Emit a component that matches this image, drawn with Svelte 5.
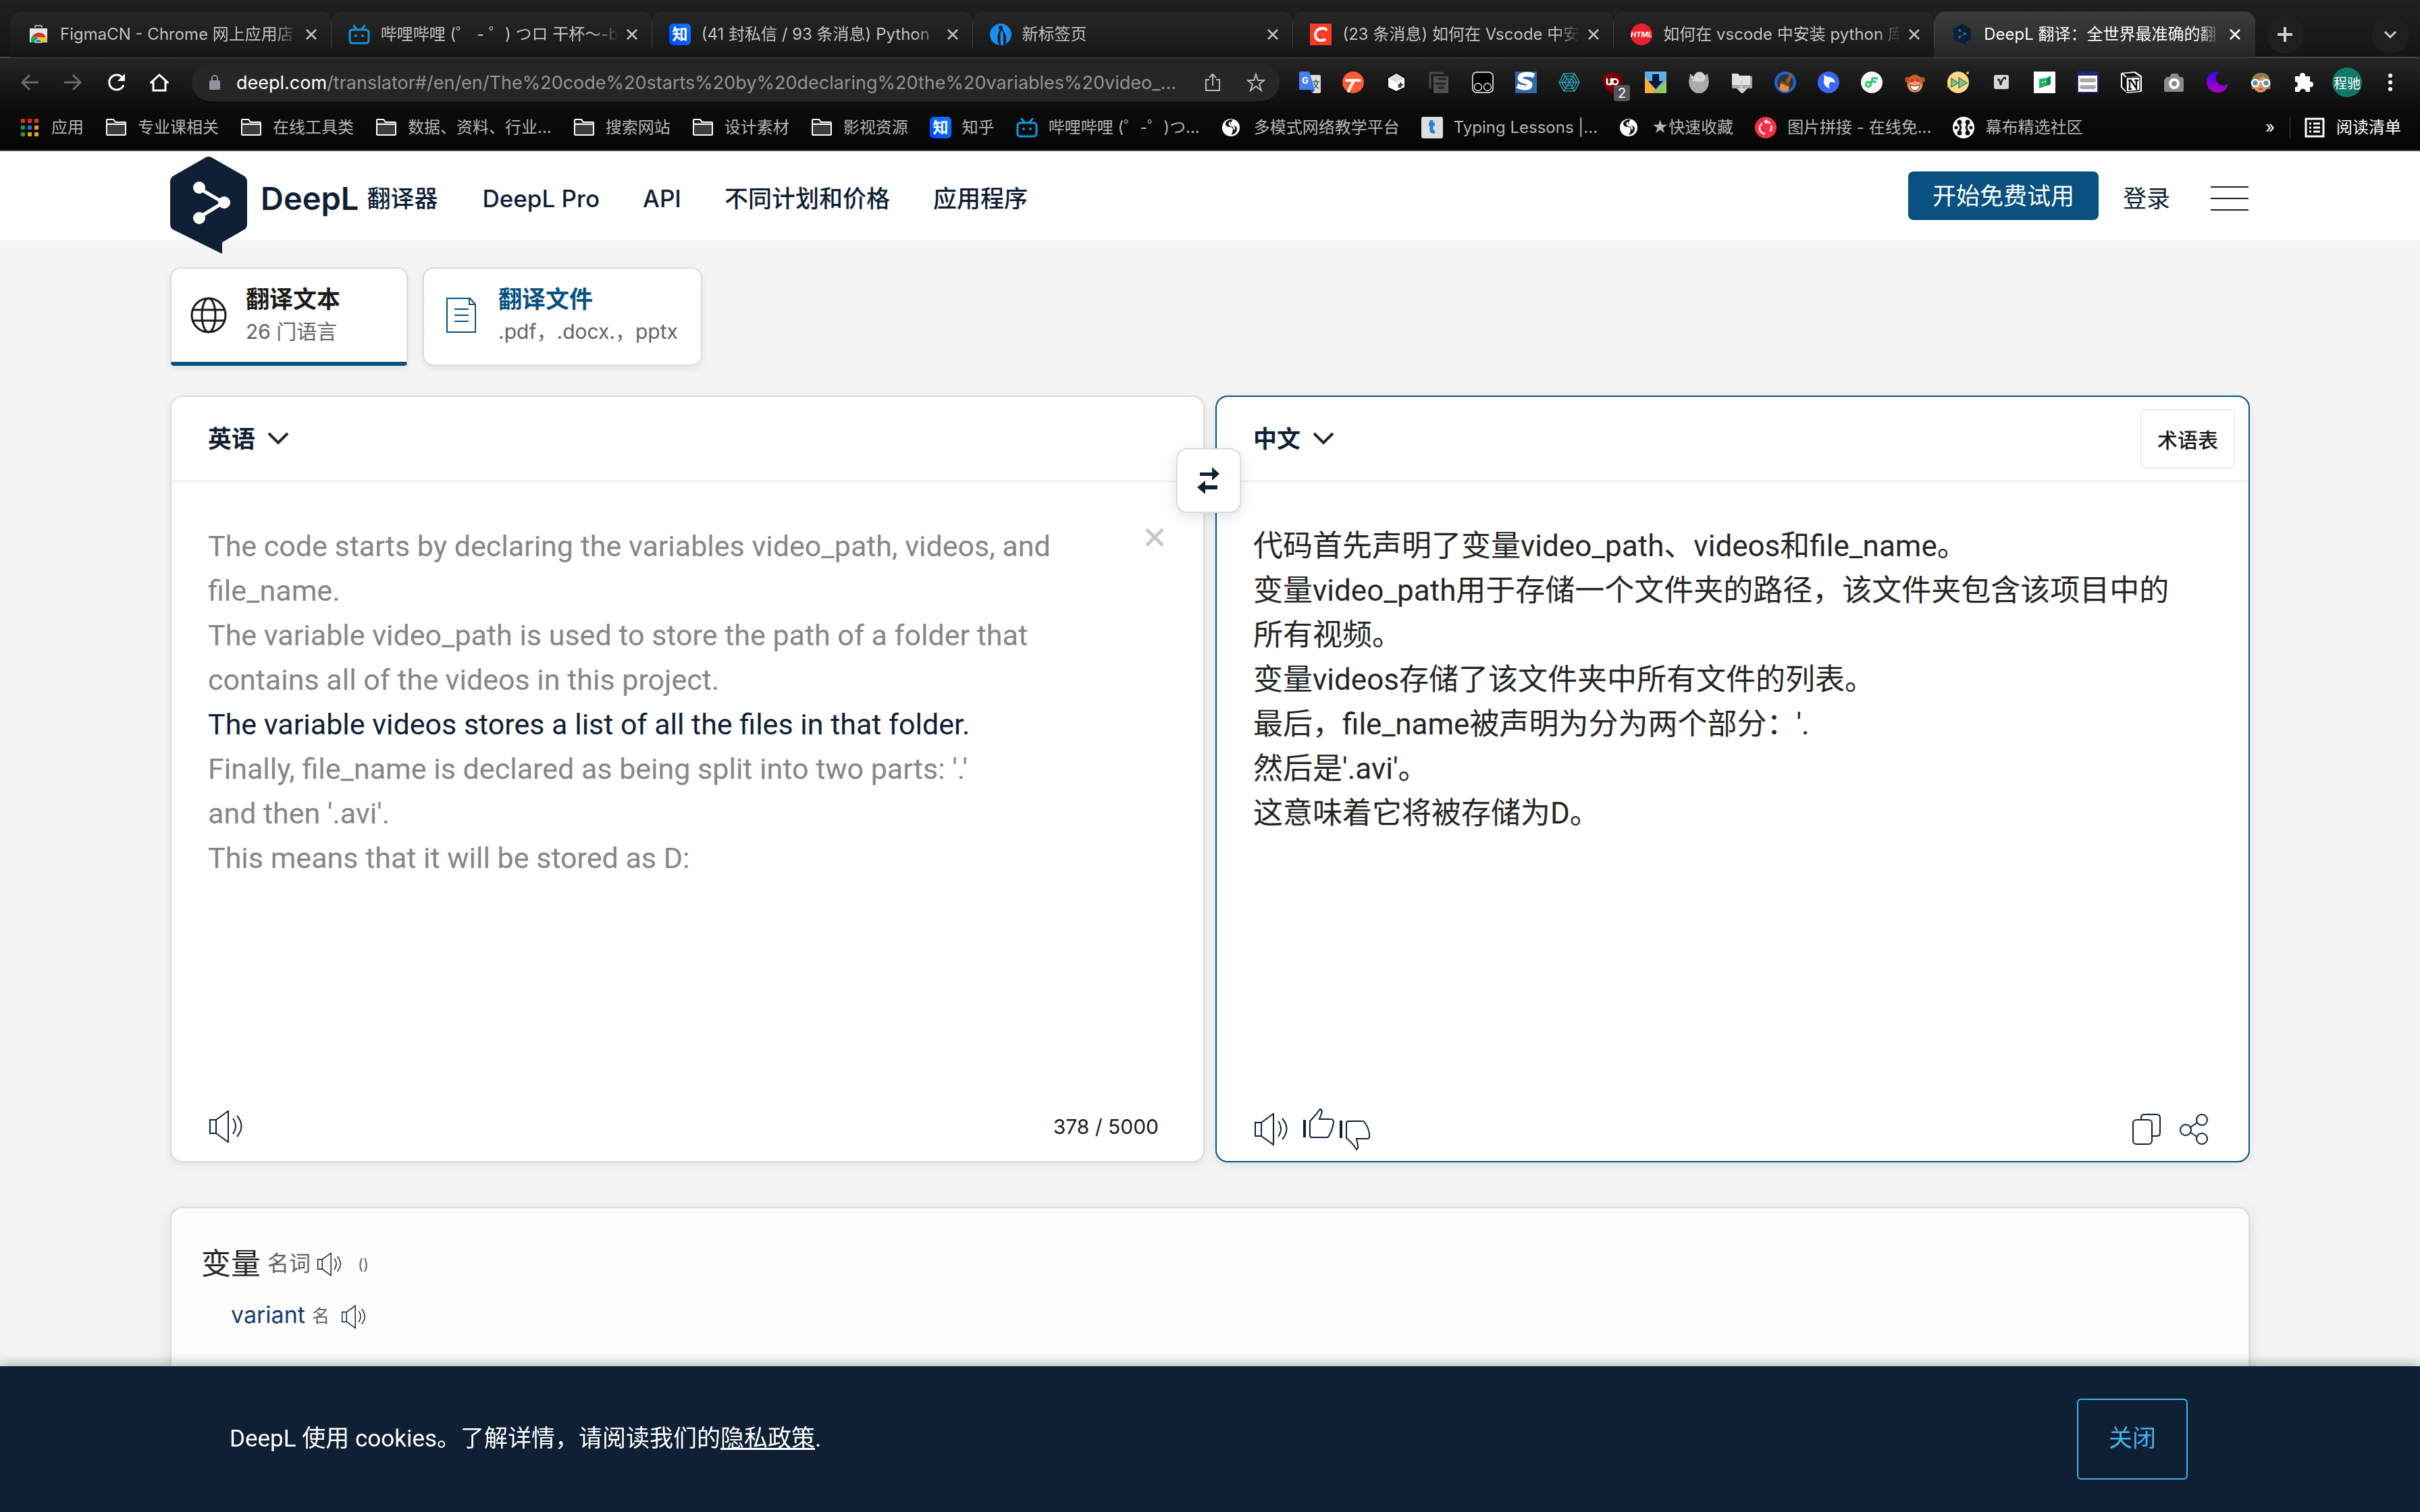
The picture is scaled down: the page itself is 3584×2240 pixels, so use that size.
<script lang="ts">
  type Icon = { name: string; svg: string }

  const bili = '<g fill="none" stroke="#1296db" stroke-width="3" stroke-linecap="round"><rect x="2" y="9" width="28" height="20" rx="4"/><path d="M8 3l4 5M24 3l-4 5"/></g><g fill="#1296db"><circle cx="11" cy="18" r="2"/><circle cx="21" cy="18" r="2"/></g>'
  const zhihu = '<defs><linearGradient id="zh" x1="0" y1="1" x2="1" y2="0"><stop stop-color="#0044ff"/><stop offset="1" stop-color="#0a7cff"/></linearGradient></defs><rect width="32" height="32" rx="6" fill="url(#zh)"/><text x="16" y="24" font-size="23" font-weight="700" fill="#fff" text-anchor="middle">知</text>'
  const globe = '<circle cx="14" cy="16" r="13" fill="#fff"/><path d="M13 4q-8 3-7 7t6 4 5 4-3 8q9-2 9-9 0-4-5-5t-4-4 3-5z" fill="#111"/><path d="M13 8q-3 3 1 5 6 1 5 6" fill="none" stroke="#fff" stroke-width="2.4"/>'
  const folder = '<path d="M2 7V5q0-1 1-1h9l3 4h14q1 0 1 1v17q0 1-1 1H3q-1 0-1-1z" fill="#3d3d3d" stroke="#fff" stroke-width="2"/><path d="M2 11h28" stroke="#fff" stroke-width="2"/><path d="M3 5h8l2 3H3z" fill="#111"/>'

  const tabs = [
    { title: 'FigmaCN - Chrome 网上应用店', svg: '<path d="M11 6V4q0-1 1-1h8q1 0 1 1v2" fill="none" stroke="#aaa" stroke-width="2"/><path d="M3 7h26v21H3z" fill="#e6e6e6"/><path d="M5 28a11 11 0 0 1 6-13l5 8-2 5z" fill="#2da44e"/><path d="M8 18a11 11 0 0 1 19 2H16z" fill="#dc2b2b"/><path d="M16 20h11q2 3 1 8H16z" fill="#fbc116"/><path d="M11 28a5 5 0 1 1 10 0z" fill="#2a7de1" stroke="#fff"/>' },
    { title: '哔哩哔哩 (゜ - ゜) つロ 干杯～-b', svg: bili },
    { title: '(41 封私信 / 93 条消息) Python', svg: zhihu },
    { title: '新标签页', svg: '<circle cx="16" cy="16" r="16" fill="#1490f2"/><path d="M14 32C10 24 11 15 15 9q2-1 4 0c5 6 6 14 4 21q-3 2-9 2z" fill="#151515"/><path d="M16 32q-1-12 0-21h3q2 10 1 21z" fill="#1490f2"/><circle cx="16" cy="6" r="3" fill="#151515"/>' },
    { title: '(23 条消息) 如何在 Vscode 中安', svg: '<path d="M0 0h32v32H0z" fill="#fc3b25"/><path d="M25 10q-3-4-8-3c-7 1-9 6-9 10s3 8 8 8q4 0 7-2" fill="none" stroke="#fff" stroke-width="4"/>' },
    { title: '如何在 vscode 中安装 python 库', svg: '<circle cx="16" cy="16" r="16" fill="#f01f2c"/><text x="16" y="20" font-size="11" font-weight="700" font-style="italic" fill="#fff" text-anchor="middle">HTML</text>' },
    { title: 'DeepL 翻译：全世界最准确的翻', active: true, svg: '<path d="M16 0l12 7q1 1 1 2v13q0 1-1 2l-6 3v5L4 24q-1-1-1-2V9q0-1 1-2z" fill="#0a2239"/><g fill="#41617f"><circle cx="12" cy="10" r="2"/><circle cx="20" cy="15" r="2"/><circle cx="12" cy="20" r="2"/></g><path d="M12 10l8 5-8 5" fill="none" stroke="#41617f"/>' },
  ]

  const extensions: Icon[] = [
    { name: 'Google 翻译', svg: '<path d="M14 5h16q2 0 2 2v23q0 2-2 2H20z" fill="#dcdcdc"/><path d="M20 15h10M25 12v3M28 15q-2 7-7 10M22 17q2 5 7 8" stroke="#57707a" stroke-width="2" fill="none"/><path d="M16 27h7l-4 5z" fill="#2a35b8"/><path d="M2 0h13l8 27H2q-2 0-2-2V2q0-2 2-2z" fill="#4580f0"/><text x="9" y="18" font-size="13" font-weight="700" fill="#fff" text-anchor="middle">G</text>' },
    { name: 'Tampermonkey', svg: '<circle cx="16" cy="16" r="16" fill="#ff5a33"/><path d="M6 13h20M17 13L9 29" stroke="#fff" stroke-width="4" stroke-linecap="round" fill="none"/>' },
    { name: '3D', svg: '<path d="M16 1l13 7v16l-13 8-13-8V8z" fill="#000"/><path d="M16 3l12 7v13l-12 6-12-6V10z" fill="#fff"/><path d="M16 3l12 7-12 6-12-6z" fill="#dcdcdc"/><path d="M22 16v8M18 20h8M19 24l5-6" stroke="#333" stroke-width="2"/>' },
    { name: '复制', svg: '<path d="M2 25V2h20" fill="none" stroke="#4c4c4c" stroke-width="3"/><path d="M7 7h22v25H7z" fill="#505050"/><path d="M14 11h12M10 18h15M13 24h10" stroke="#222" stroke-width="3"/>' },
    { name: '油猴', svg: '<rect x="1" y="1" width="30" height="30" rx="6" fill="#000" stroke="#fff" stroke-width="1.5"/><circle cx="9" cy="23" r="5.5" fill="none" stroke="#fff" stroke-width="1.3"/><circle cx="23" cy="23" r="5.5" fill="none" stroke="#fff" stroke-width="1.3"/>' },
    { name: 'Stylus', svg: '<path d="M0 0h32v32H0z" fill="#2f69a8"/><path d="M28 6q-12-4-19 0-5 5 3 8 9 2 10 5 0 5-7 5-6 0-12-3" fill="none" stroke="#fff" stroke-width="7"/>' },
    { name: '蛛网', svg: '<g fill="none" stroke="#2997ab" stroke-width="1.6"><path d="M8 3h16l7 13-7 13H8L1 16z"/><path d="M10 7h12l5 9-5 9H10l-5-9z"/><path d="M12 11h8l3 5-3 5h-8l-3-5z"/><path d="M8 3l16 26M24 3L8 29M1 16h30"/></g>' },
    { name: 'uBlock', svg: '<path d="M16 0q5 4 14 4v12q-1 10-14 16Q3 26 2 16V4q9 0 14-4z" fill="#7a0008"/><path d="M8 10v7q0 2 3 2h3v-9M16 10v9" fill="none" stroke="#fff" stroke-width="2.6"/><circle cx="20" cy="15" r="4" fill="none" stroke="#fff" stroke-width="2.4"/>' },
    { name: '下载', svg: '<path d="M0 0h32v32H0z" fill="#5fb0e3"/><path d="M0 8l16 18-4 6H0z" fill="#fbab44"/><path d="M32 12L12 32h20z" fill="#8fcb60"/><path d="M11 4h10v10h6L16 26 5 14h6z" fill="#06163c"/>' },
    { name: '果汁', svg: '<path d="M1 15L3 3l7 5 12 0 7-5 2 12z" fill="#a4a4a4"/><circle cx="17" cy="9" r="8.5" fill="#d9d9d9"/><path d="M17 9V2M17 9l6-4M17 9l-6-4M17 9l7 4" stroke="#bbb"/><path d="M1 15h30q-1 13-11 17h-8Q2 28 1 15z" fill="#ababab"/><circle cx="6" cy="9" r="1.2" fill="#fff"/><circle cx="8" cy="13" r="1.2" fill="#fff"/>' },
    { name: '下载夹', svg: '<path d="M5 7h26v18H5z" fill="#a5a5a5"/><path d="M1 3h9l2 3h16v19H1z" fill="#e2e2e2"/><path d="M1 20h27v5H1z" fill="#9c9c9c"/><path d="M3 22h24" stroke="#ddd" stroke-dasharray="1 2" stroke-width="2"/><path d="M15 13v16M11 26l5 5 5-5z" stroke="#cfcfcf" stroke-width="3" fill="#cfcfcf"/>' },
    { name: '清理', svg: '<circle cx="16" cy="16" r="14" fill="#303438" stroke="#1d63dc" stroke-width="4"/><path d="M24 2l3 2-6 14-5-3z" fill="#a25628"/><path d="M11 14l12 6-1 3-13-6z" fill="#8a4420"/><path d="M9 17l13 6-2 6q-8 2-13-3z" fill="#e98c2f"/>' },
    { name: '海豚', svg: '<circle cx="16" cy="16" r="16" fill="#3867fb"/><path d="M9 5l6 3q9 0 11 9-5-3-8-1-3 4 0 9Q6 21 10 10z" fill="#fff"/>' },
    { name: '飞书', svg: '<circle cx="16" cy="16" r="16" fill="#f7f7f7"/><circle cx="11" cy="19" r="3.6" fill="none" stroke="#2dc868" stroke-width="3"/><path d="M15 18l2-8h8M17 15h6" fill="none" stroke="#2dc868" stroke-width="3"/>' },
    { name: '猴子', svg: '<path d="M12 6l-1-3 4 2 1-4 2 4 3-2-1 4z" fill="#5c2a15"/><circle cx="5" cy="12" r="4" fill="#a85228"/><circle cx="27" cy="12" r="4" fill="#a85228"/><ellipse cx="16" cy="18" rx="12" ry="13" fill="#c2642f"/><ellipse cx="16" cy="22" rx="10" ry="8" fill="#e9a273"/><circle cx="12" cy="13" r="2.6" fill="#f02a1d"/><circle cx="20" cy="13" r="2.6" fill="#f02a1d"/><path d="M9 20q7 3 14 0-1 8-7 8t-7-8z" fill="#fff" stroke="#54230f"/>' },
    { name: '快进', svg: '<circle cx="16" cy="16" r="16" fill="#fbd88a"/><circle cx="30" cy="2" r="2" fill="#f4b21a"/><circle cx="1" cy="22" r="1.5" fill="#f4b21a"/><path d="M6 10l10 7-10 6zM17 9l12 8-12 7z" fill="#7fc489" stroke="#4a7d51" stroke-width="1.4"/>' },
    { name: '待办', svg: '<rect x="5" y="5" width="22" height="21" rx="3" fill="#d6d6d6"/><path d="M10 12h3l2 8q1-8 5-10" fill="none" stroke="#222" stroke-width="2.4"/><path d="M18 8h5v5z" fill="#222"/>' },
    { name: '聊天', svg: '<path d="M0 0h32v32H0z" fill="#fff"/><path d="M8 11l14-2v11L8 25z" fill="#1cb066"/><path d="M20 9l5-3v13l-5 2z" fill="#0f8a4d"/><path d="M12 16h2M16 15h2" stroke="#fff" stroke-width="2"/>' },
    { name: '阅读', svg: '<path d="M0 0h32v32H0z" fill="#fff"/><path d="M1 1h30v30H1z" fill="none" stroke="#20257e" stroke-width="2"/><path d="M0 0h32v6H0z" fill="#20257e"/><path d="M7 13h18M7 23h18" stroke="#aaa" stroke-width="6" stroke-linecap="round"/>' },
    { name: 'Notion', svg: '<path d="M2 3l20-2 9 6v22l-21 2-8-8z" fill="#fff" stroke="#fff" stroke-width="2" stroke-linejoin="round"/><path d="M3 4l6 6v19l-6-6zM5 3l16-1 7 5-18 1z" fill="#111"/><path d="M9 9l20-1v20L9 30z" fill="#fff" stroke="#111" stroke-width="1.5"/><path d="M12 13h4l8 12V13M21 13h6M14 13v12M12 26h5" fill="none" stroke="#111" stroke-width="2.4"/>' },
    { name: '截图', svg: '<path d="M3 11l1-3h5l3-5h9l3 5h4l2 3v17q0 2-2 2H3q-2 0-2-2V13q0-2 2-2z" fill="#8b8b8b"/><circle cx="16" cy="18" r="6" fill="#8b8b8b" stroke="#fff" stroke-width="4"/>' },
    { name: '夜间模式', svg: '<defs><linearGradient id="moon" x2="0" y2="1"><stop stop-color="#3f00ff"/><stop offset="1" stop-color="#b300b8"/></linearGradient></defs><path d="M19 0C7 9 18 27 32 18 28 38 0 34 0 15 0 5 9-1 19 0z" fill="url(#moon)"/>' },
    { name: '眼镜', svg: '<path d="M3 26Q-1 3 16 2t14 24z" fill="#97774c"/><ellipse cx="16" cy="19" rx="11" ry="12" fill="#da9164"/><path d="M5 13Q15 13 20 6q3 5 7 6 0-10-11-10T5 13z" fill="#97774c"/><circle cx="8" cy="17" r="5" fill="#5794a3" stroke="#fff" stroke-width="2.6"/><circle cx="24" cy="17" r="5" fill="#5794a3" stroke="#fff" stroke-width="2.6"/><path d="M13 15q3-1 6 0" stroke="#fff" stroke-width="2" fill="none"/><path d="M12 26q4-2 8 0-4 2-8 0z" fill="#b0392b"/>' },
    { name: '扩展程序', svg: '<path d="M3 7h7V6a4 4 0 0 1 8 0v1h7v8h1a4 4 0 0 1 0 8h-1v7h-6a4 4 0 0 0-9 0H3v-7a4 4 0 0 0 0-8z" fill="#fff"/>' },
  ]

  const bookmarks = [
    { title: '应用', svg: '<g><path d="M3 3h6v6H3zM13 3h6v6h-6zM23 3h6v6h-6z" fill="#ea2a2a"/><path d="M3 13h6v6H3zM3 23h6v6H3z" fill="#2b9348"/><path d="M13 13h6v6h-6z" fill="#1a73e8"/><path d="M23 13h6v6h-6zM13 23h6v6h-6zM23 23h6v6h-6z" fill="#f39c12"/></g>' },
    { title: '专业课相关', svg: folder },
    { title: '在线工具类', svg: folder },
    { title: '数据、资料、行业...', svg: folder },
    { title: '搜索网站', svg: folder },
    { title: '设计素材', svg: folder },
    { title: '影视资源', svg: folder },
    { title: '知乎', svg: zhihu },
    { title: '哔哩哔哩 (゜-゜)つ...', svg: bili },
    { title: '多模式网络教学平台', svg: globe },
    { title: 'Typing Lessons |...', svg: '<rect width="32" height="32" rx="3" fill="#dedede"/><path d="M15 5v15q0 3 5 2M11 11h9" fill="none" stroke="#2b7fd0" stroke-width="5"/>' },
    { title: '★快速收藏', svg: globe },
    { title: '图片拼接 - 在线免...', svg: '<circle cx="16" cy="16" r="16" fill="#fb2f43"/><path d="M11 10a8 8 0 0 0 4 15" fill="none" stroke="#fff" stroke-width="2.5"/><path d="M15 7h3a9 9 0 0 1 4 15" fill="none" stroke="#fff" stroke-width="2.5" stroke-dasharray="9 3"/><path d="M18 3v8l-5-4z" fill="#fff"/>' },
    { title: '幕布精选社区', svg: '<circle cx="16" cy="16" r="16" fill="#fff"/><g fill="#111"><circle cx="10" cy="8" r="3.5"/><circle cx="22" cy="8" r="3.5"/><circle cx="10" cy="24" r="3.5"/><circle cx="22" cy="24" r="3.5"/><circle cx="5" cy="16" r="2.6"/><circle cx="27" cy="16" r="2.6"/></g><path d="M9 8l3 8-3 8M23 8l-3 8 3 8" fill="none" stroke="#111" stroke-width="3"/>' },
  ]

  const source = [
    { text: 'The code starts by declaring the variables video_path, videos, and\nfile_name.' },
    { text: 'The variable video_path is used to store the path of a folder that\ncontains all of the videos in this project.' },
    { text: 'The variable videos stores a list of all the files in that folder.', current: true },
    { text: "Finally, file_name is declared as being split into two parts: '.'\nand then '.avi'." },
    { text: 'This means that it will be stored as D:' },
  ]

  const target = [
    '代码首先声明了变量video_path、videos和file_name。',
    '变量video_path用于存储一个文件夹的路径，该文件夹包含该项目中的',
    '所有视频。',
    '变量videos存储了该文件夹中所有文件的列表。',
    "最后，file_name被声明为分为两个部分：'.",
    "然后是'.avi'。",
    '这意味着它将被存储为D。',
  ].join('\n')
</script>

{#snippet speaker()}
  <svg class="speaker" viewBox="0 0 50 48" aria-hidden="true">
    <path d="M1 14h9v20H1zM10 14L28 1v46L10 34M35 12q8 11 0 23M41 8q13 15 0 31" />
  </svg>
{/snippet}

{#snippet chevron()}
  <svg class="chevron" viewBox="0 0 32 20" aria-hidden="true"><path d="M2 2l14 14L30 2" /></svg>
{/snippet}

<div class="page">
  <div class="browser">
    <div class="tabstrip">
      <div class="tabs" role="tablist">
        {#each tabs as tab}
          <div class="tab" class:active={tab.active} role="tab" tabindex="0" aria-selected={!!tab.active}>
            <svg class="icon" viewBox="0 0 32 32" aria-hidden="true">{@html tab.svg}</svg>
            <span class="tab-title">{tab.title}</span>
            <button class="tab-close" aria-label="关闭标签页">
              <svg viewBox="0 0 16 16"><path d="M1 1l14 14M15 1L1 15" /></svg>
            </button>
          </div>
        {/each}
      </div>
      <button class="round" aria-label="新标签页"><svg viewBox="0 0 24 24"><path d="M12 1v22M1 12h22" stroke-width="4" /></svg></button>
      <button class="round last" aria-label="搜索标签页"><svg viewBox="0 0 24 24"><path d="M4 8l8 8 8-8" stroke-width="3" /></svg></button>
    </div>

    <div class="toolbar">
      <button class="tool dim" aria-label="后退"><svg viewBox="0 0 28 28"><path d="M27 14H3M14 3L3 14l11 11" /></svg></button>
      <button class="tool dim" aria-label="前进"><svg viewBox="0 0 28 28"><path d="M1 14h24M14 3l11 11-11 11" /></svg></button>
      <button class="tool" aria-label="重新加载"><svg viewBox="0 0 28 28"><path d="M24 8A11 11 0 1 0 25 18" /><path d="M27 1v11H16z" fill="#fff" stroke="none" /></svg></button>
      <button class="tool" aria-label="主页"><svg viewBox="0 0 28 28"><path d="M5 14v12h18V14h3L14 3 2 14z" /></svg></button>
      <div class="omnibox">
        <svg class="lock" viewBox="0 0 16 22" aria-hidden="true"><path d="M4 9V5a4 4 0 0 1 8 0v4" fill="none" stroke="#8d9299" stroke-width="2" /><rect y="8" width="16" height="14" rx="2" fill="#9095a0" /></svg>
        <label for="url">deepl.com</label>
        <input id="url" value="/translator#/en/en/The%20code%20starts%20by%20declaring%20the%20variables%20video_..." />
        <button class="tool grey" aria-label="分享"><svg viewBox="0 0 28 28"><path d="M9 10H4v16h20V10h-5M14 19V2M9 7l5-5 5 5" /></svg></button>
        <button class="tool grey" aria-label="添加书签"><svg viewBox="0 0 28 28"><path d="M14 2l3 9h9l-7 6 3 9-8-6-8 6 3-9-7-6h9z" /></svg></button>
      </div>
      <div class="extensions">
        {#each extensions as ext}
          <button class="ext" aria-label={ext.name}>
            <svg class="icon" viewBox="0 0 32 32">{@html ext.svg}</svg>
            {#if ext.name === 'uBlock'}<span class="badge">2</span>{/if}
          </button>
        {/each}
        <button class="avatar">程驰</button>
        <button class="ext" aria-label="菜单"><svg class="icon" viewBox="0 0 32 32" fill="#fff"><circle cx="16" cy="6" r="3" /><circle cx="16" cy="16" r="3" /><circle cx="16" cy="26" r="3" /></svg></button>
      </div>
    </div>

    <nav class="bookmarks" aria-label="书签">
      {#each bookmarks as mark}
        <a href="#bookmark"><svg class="icon" viewBox="0 0 32 32" aria-hidden="true">{@html mark.svg}</svg>{mark.title}</a>
      {/each}
      <button class="more">»</button>
      <a class="reading" href="#reading">
        <svg class="icon" viewBox="0 0 32 32" aria-hidden="true"><path d="M3 3h26v26H3zM14 10h10M14 16h10M14 22h10M8 10h3M8 16h3M8 22h3" fill="none" stroke="#fff" stroke-width="3" /></svg>阅读清单
      </a>
    </nav>
  </div>

  <header class="site-header">
    <a class="brand" href="#home">
      <svg class="logo" viewBox="0 0 114 144" aria-hidden="true">
        <path d="M53 1q4-2 8 0l49 28q4 3 4 8v63q0 5-4 8l-33 19v17L4 108q-4-3-4-8V37q0-5 4-8z" fill="#0f2035" />
        <path d="M43 47l36 21-36 22" fill="none" stroke="#fff" stroke-width="5" />
        <g fill="#fff"><circle cx="43" cy="46" r="9" /><circle cx="80" cy="68" r="9" /><circle cx="43" cy="91" r="9" /></g>
      </svg>
      <span class="brand-name">DeepL</span>
      <span class="brand-sub">翻译器</span>
    </a>
    <nav class="links" aria-label="主导航">
      <a href="#pro">DeepL Pro</a>
      <a href="#api">API</a>
      <a href="#plans">不同计划和价格</a>
      <a href="#apps">应用程序</a>
    </nav>
    <button class="trial">开始免费试用</button>
    <a class="login" href="#login">登录</a>
    <button class="burger" aria-label="菜单"><span></span><span></span><span></span></button>
  </header>

  <main>
    <div class="modes">
      <button class="mode selected">
        <svg viewBox="0 0 54 54" aria-hidden="true"><circle cx="27" cy="27" r="25" /><ellipse cx="27" cy="27" rx="10" ry="25" /><path d="M4 19h46M4 35h46" /></svg>
        <span class="mode-text"><strong>翻译文本</strong><span>26 门语言</span></span>
      </button>
      <button class="mode">
        <svg class="thin" viewBox="0 0 54 54" aria-hidden="true"><path d="M6 2h34l8 9v41H6zM39 2v9h9M17 18h21M17 27h21M17 36h21" /></svg>
        <span class="mode-text"><strong>翻译文件</strong><span>.pdf，.docx.，pptx</span></span>
      </button>
    </div>

    <div class="translator">
      <section class="panel">
        <div class="panel-head">
          <button class="lang">英语{@render chevron()}</button>
        </div>
        <div class="panel-body">
          <div class="source" contenteditable="true" role="textbox" tabindex="0" aria-multiline="true" aria-label="原文">
            {#each source as part}<p class:current={part.current}>{part.text}</p>{/each}
          </div>
          <button class="clear" aria-label="清除"><svg viewBox="0 0 28 28"><path d="M2 2l24 24M26 2L2 26" /></svg></button>
        </div>
        <div class="panel-foot">
          <button aria-label="朗读">{@render speaker()}</button>
          <span class="count">378 / 5000</span>
        </div>
      </section>

      <button class="swap" aria-label="交换语言">
        <svg viewBox="0 0 34 40"><path d="M4 8h18V0l11 10-11 10v-7H4zM30 27H12v-7L0 30l12 10v-7h18z" /></svg>
      </button>

      <section class="panel focused">
        <div class="panel-head">
          <button class="lang">中文{@render chevron()}</button>
          <button class="glossary">术语表</button>
        </div>
        <div class="panel-body">
          <textarea aria-label="译文" spellcheck="false" value={target}></textarea>
        </div>
        <div class="panel-foot target-foot">
          <button class="listen" aria-label="朗读">{@render speaker()}</button>
          <button aria-label="赞"><svg class="thumb" viewBox="0 0 46 63"><path class="bar" d="M2 17v26" /><path d="M10 19Q19 10 25 1q4 2 2 7l-3 8h17q4 0 4 5-2 12-7 20-1 2-3 2H13q-3 0-3-3z" /></svg></button>
          <button aria-label="踩"><svg class="thumb" viewBox="0 0 46 63"><path class="bar" d="M2 18v26" /><path d="M10 22q0-3 3-3h21q2 0 3 2 6 8 7 17 1 7-3 7H25l2 10q1 4-2 6-6-10-15-17z" /></svg></button>
          <button class="push" aria-label="复制"><svg class="action" viewBox="0 0 42 46"><rect x="1" y="9" width="28" height="36" rx="5" /><path d="M13 9V6q0-5 5-5h18q5 0 5 5v22q0 5-5 5h-7" /></svg></button>
          <button aria-label="分享"><svg class="action" viewBox="0 0 42 46"><circle cx="9" cy="24" r="8" /><circle cx="33" cy="9" r="8" /><circle cx="33" cy="37" r="8" /><path d="M16 20l10-7M16 28l10 6" /></svg></button>
        </div>
      </section>
    </div>

    <section class="dictionary">
      <div class="entry">
        <span class="term">变量</span>
        <span class="kind">名词</span>
        <button aria-label="朗读">{@render speaker()}</button>
        <span class="note">()</span>
      </div>
      <div class="entry meaning">
        <a href="#variant">variant</a>
        <span class="kind-small">名</span>
        <button aria-label="朗读">{@render speaker()}</button>
      </div>
    </section>
  </main>

  <aside class="cookies">
    <p>DeepL 使用 cookies。了解详情，请阅读我们的<a href="#privacy">隐私政策</a>.</p>
    <button>关闭</button>
  </aside>
</div>

<style>
  :global(body) {
    background: #f4f4f4;
  }

  .page {
    --navy: #0f2035;
    --blue: #085180;
    --line: #dcdcdc;
    display: flex;
    flex-direction: column;
    height: 100vh;
    overflow: hidden;
    font-family: Inter, "Noto Sans CJK SC", sans-serif;
    color: var(--navy);
  }

  .page :global(*) {
    box-sizing: border-box;
  }

  button {
    display: flex;
    align-items: center;
    justify-content: center;
    padding: 0;
    border: 0;
    background: none;
    color: inherit;
    font: inherit;
    cursor: pointer;
  }

  a {
    color: inherit;
    text-decoration: none;
  }

  p {
    margin: 0;
  }

  svg {
    display: block;
    flex: none;
  }

  .icon {
    width: 32px;
    height: 32px;
  }

  /* browser chrome */
  .browser {
    flex: none;
    background: #050505;
    border-bottom: 2px solid #444;
    font-size: 24px;
    color: #b4b4b4;
  }

  .tabstrip {
    display: flex;
    align-items: center;
    height: 86px;
    padding: 18px 16px 0;
    background: linear-gradient(#212121, #141414);
    border-bottom: 2px solid #444;
  }

  .tabs {
    display: flex;
    flex: 1;
    min-width: 0;
    height: 68px;
  }

  .tab {
    display: flex;
    flex: 1 1 0;
    align-items: center;
    min-width: 0;
    padding: 0 22px 0 25px;
    border-radius: 16px 16px 0 0;
    background: linear-gradient(90deg, #444, #444) right center / 1px 40px no-repeat, linear-gradient(#272727, #161616);
    color: #c4c4c4;
  }

  .tab.active {
    background: linear-gradient(#3d3d3d, #262626);
    color: #fff;
  }

  .tab-title {
    flex: 1;
    margin: 0 12px 0 16px;
    overflow: hidden;
    white-space: nowrap;
    line-height: 32px;
    mask-image: linear-gradient(90deg, #000 calc(100% - 36px), transparent);
  }

  .tab-close svg {
    width: 16px;
    height: 16px;
    stroke: currentColor;
    stroke-width: 2.5;
  }

  .round {
    width: 56px;
    height: 56px;
    margin-left: 16px;
    border-radius: 50%;
    background: #1f1f1f;
    color: #d0d0d0;
  }

  .round.last {
    margin-left: 100px;
  }

  .round svg {
    width: 24px;
    height: 24px;
    fill: none;
    stroke: currentColor;
  }

  .toolbar {
    display: flex;
    align-items: center;
    height: 72px;
    padding: 0 28px;
    background: linear-gradient(#262626, #0c0c0c);
  }

  .tool {
    width: 32px;
    margin-right: 32px;
    color: #fff;
  }

  .tool.dim {
    color: #6b6b6b;
  }

  .tool.grey {
    margin: 0 0 0 32px;
    color: #bbb;
  }

  .tool svg {
    width: 28px;
    height: 28px;
    fill: none;
    stroke: currentColor;
    stroke-width: 3;
  }

  .tool.grey svg {
    stroke-width: 2;
  }

  .omnibox {
    display: flex;
    flex: 1;
    align-items: center;
    height: 56px;
    padding: 0 19px 0 26px;
    border-radius: 28px;
    background: #262626;
    font-size: 27px;
  }

  .lock {
    width: 16px;
    height: 22px;
    margin-right: 24px;
  }

  .omnibox label {
    color: #fff;
  }

  .omnibox input {
    flex: 1;
    min-width: 0;
    padding: 0;
    border: 0;
    outline: 0;
    background: none;
    color: #949494;
    font: inherit;
  }

  .extensions {
    display: flex;
    align-items: center;
    gap: 32px;
    margin-left: 29px;
  }

  .ext {
    position: relative;
  }

  .badge {
    position: absolute;
    top: 20px;
    left: 18px;
    width: 24px;
    border-radius: 4px;
    background: #555;
    color: #fff;
    font-size: 20px;
    line-height: 24px;
  }

  .avatar {
    width: 44px;
    height: 44px;
    margin: 0 -6px;
    border-radius: 50%;
    background: #0f7a68;
    color: #fff;
    font-size: 20px;
    white-space: nowrap;
  }

  .bookmarks {
    display: flex;
    align-items: center;
    gap: 32px;
    height: 64px;
    padding: 0 28px 2px;
    background: linear-gradient(#0c0c0c, #050505);
    line-height: 32px;
    white-space: nowrap;
  }

  .bookmarks a {
    display: flex;
    align-items: center;
    gap: 16px;
  }

  .more {
    margin-left: auto;
    color: #fff;
  }

  .bookmarks .reading {
    margin-left: -10px;
    padding-left: 20px;
    border-left: 1px solid #444;
    color: #fff;
  }

  /* site header */
  .site-header {
    display: flex;
    flex: none;
    align-items: center;
    height: 132px;
    padding: 8px 254px 0 252px;
    background: #fff;
    font-size: 35px;
    line-height: 48px;
  }

  .brand {
    display: flex;
    align-items: center;
    height: 124px;
    font-weight: 600;
  }

  .logo {
    align-self: flex-start;
    width: 114px;
    height: 144px;
  }

  .brand-name {
    margin: 0 12px 0 20px;
    font-size: 47px;
  }

  .brand-sub {
    font-weight: 500;
  }

  .links {
    display: flex;
    flex: 1;
    gap: 64px;
    margin-left: 66px;
    font-weight: 500;
  }

  .trial {
    height: 72px;
    margin-bottom: 8px;
    padding: 0 36px;
    border-radius: 8px;
    background: var(--blue);
    color: #fff;
  }

  .login {
    margin: 0 60px 0 36px;
  }

  .burger {
    flex-direction: column;
    gap: 15px;
    width: 56px;
  }

  .burger span {
    width: 100%;
    height: 2px;
    background: var(--navy);
  }

  /* translator */
  main {
    display: flex;
    flex: 1;
    flex-direction: column;
    padding: 40px 252px 0;
  }

  .modes {
    display: flex;
    gap: 22px;
    margin-bottom: 44px;
  }

  .mode {
    gap: 28px;
    height: 146px;
    padding: 0 34px 4px 28px;
    border: 2px solid var(--line);
    border-radius: 16px;
    background: #fff;
    box-shadow: 0 4px 12px rgba(0, 0, 0, 0.07);
    color: var(--blue);
    text-align: left;
  }

  .mode.selected {
    padding-right: 98px;
    border-bottom: 6px solid var(--blue);
    border-radius: 16px 16px 6px 6px;
    padding-bottom: 0;
    color: #1b1b1b;
  }

  .mode svg {
    width: 54px;
    height: 54px;
    fill: none;
    stroke: currentColor;
    stroke-width: 3;
  }

  .mode .thin {
    stroke-width: 2;
  }

  .mode-text {
    display: flex;
    flex-direction: column;
    color: #636363;
    font-size: 30px;
    line-height: 48px;
  }

  .mode-text strong {
    font-size: 35px;
    font-weight: 600;
  }

  .mode strong {
    color: var(--blue);
  }

  .selected strong {
    color: #1b1b1b;
  }

  .translator {
    position: relative;
    display: flex;
    gap: 16px;
  }

  .panel {
    display: flex;
    flex: 1 1 0;
    flex-direction: column;
    min-width: 0;
    border: 2px solid var(--line);
    border-radius: 18px;
    background: #fff;
    box-shadow: 0 4px 14px rgba(0, 0, 0, 0.08);
  }

  .panel.focused {
    border-color: var(--blue);
  }

  .panel-head {
    display: flex;
    align-items: center;
    justify-content: space-between;
    height: 126px;
    padding: 0 20px 0 54px;
    border-bottom: 2px solid #eee;
  }

  .lang {
    gap: 18px;
    font-size: 35px;
    font-weight: 600;
    line-height: 48px;
  }

  .chevron {
    width: 32px;
    height: 20px;
    fill: none;
    stroke: #262626;
    stroke-width: 4;
  }

  .glossary {
    width: 140px;
    height: 88px;
    border: 2px solid #eee;
    border-radius: 6px;
    color: #1b1b1b;
    font-size: 30px;
    font-weight: 500;
  }

  .panel-body {
    display: flex;
    align-items: flex-start;
    min-height: 900px;
    padding: 62px 58px 0 54px;
    font-family: Roboto, "Noto Sans CJK SC", sans-serif;
    font-size: 44px;
    line-height: 66px;
  }

  .source {
    flex: 1;
    outline: 0;
    color: #868686;
    font-size: 43px;
    white-space: pre;
  }

  .source .current {
    color: var(--navy);
  }

  .clear {
    margin-top: 6px;
  }

  .clear svg {
    width: 28px;
    height: 28px;
    stroke: #c8c8c8;
    stroke-width: 5;
  }

  textarea {
    flex: 1;
    min-height: 820px;
    padding: 0;
    border: 0;
    outline: 0;
    background: none;
    color: #262626;
    font: inherit;
    resize: none;
    white-space: pre;
    overflow: hidden;
  }

  .panel-foot {
    display: flex;
    align-items: center;
    height: 106px;
    padding: 4px 66px 0 56px;
  }

  .target-foot {
    gap: 8px;
    padding: 12px 60px 0 56px;
  }

  .listen {
    margin-right: 14px;
  }

  .count {
    margin-left: auto;
    color: #1b1b1b;
    font-size: 30px;
  }

  .speaker {
    width: 50px;
    height: 48px;
    fill: none;
    stroke: var(--navy);
    stroke-width: 2;
  }

  .thumb {
    width: 46px;
    height: 63px;
    fill: none;
    stroke: var(--navy);
    stroke-width: 2;
  }

  .thumb .bar {
    stroke-width: 4;
  }

  .action {
    width: 42px;
    height: 46px;
    margin-left: 20px;
    fill: none;
    stroke: var(--navy);
    stroke-width: 2;
  }

  .push {
    margin-left: auto;
  }

  .swap {
    position: absolute;
    top: 78px;
    left: calc(50% - 50px);
    width: 96px;
    height: 96px;
    border: 2px solid var(--line);
    border-radius: 16px;
    background: #fff;
    box-shadow: 0 4px 20px rgba(0, 0, 0, 0.12);
  }

  .swap svg {
    width: 34px;
    height: 40px;
    fill: var(--navy);
  }

  /* dictionary */
  .dictionary {
    flex: 1;
    margin-top: 66px;
    padding: 44px 44px 0;
    border: 2px solid var(--line);
    border-bottom: 0;
    border-radius: 18px 18px 0 0;
    background: #fdfdfd;
    box-shadow: 0 4px 20px rgba(0, 0, 0, 0.1);
  }

  .entry {
    display: flex;
    align-items: center;
    gap: 10px;
    height: 70px;
    color: #636363;
  }

  .entry .speaker {
    width: 36px;
    height: 36px;
  }

  .entry button,
  .note {
    margin-top: 8px;
  }

  .term {
    color: #262626;
    font-size: 44px;
  }

  .kind {
    font-size: 32px;
  }

  .note {
    margin-left: 14px;
    font-size: 22px;
  }

  .meaning {
    margin-top: 8px;
    padding-left: 44px;
  }

  .meaning a {
    color: #173d70;
    font-size: 34px;
  }

  .kind-small {
    margin-right: 8px;
    font-size: 26px;
  }

  .cookies {
    position: fixed;
    right: 0;
    bottom: 0;
    left: 0;
    display: flex;
    align-items: center;
    justify-content: space-between;
    height: 216px;
    padding: 0 344px 0 340px;
    background: var(--navy);
    box-shadow: 0 0 20px rgba(0, 0, 0, 0.4);
    color: #fff;
    font-family: Roboto, "Noto Sans CJK SC", sans-serif;
    font-size: 35px;
    line-height: 48px;
  }

  .cookies a {
    text-decoration: underline;
  }

  .cookies button {
    width: 164px;
    height: 120px;
    border: 2px solid #43b3ee;
    border-radius: 6px;
    color: #43b3ee;
  }
</style>
